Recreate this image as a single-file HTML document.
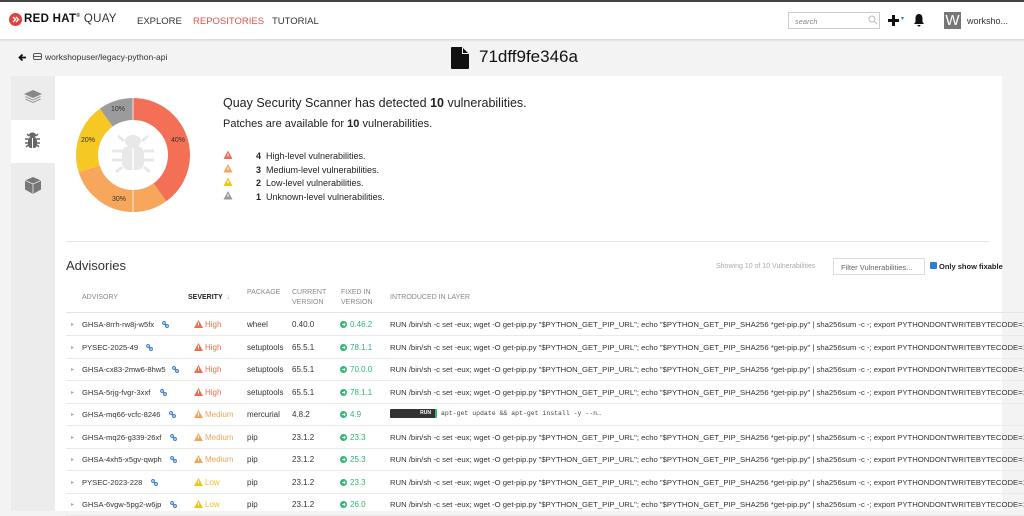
<!DOCTYPE html>
<html><head><meta charset="utf-8"><style>
*{box-sizing:border-box;margin:0;padding:0}
body{width:1024px;height:511px;overflow:hidden;background:#f3f3f3;font-family:"Liberation Sans",sans-serif;color:#333;position:relative}
.abs{position:absolute;white-space:nowrap}
.nav{position:absolute;left:0;top:0;width:1024px;height:40px;background:#fff;border-top:2px solid #444;border-bottom:1px solid #ddd;box-shadow:0 1px 2px rgba(0,0,0,.08)}
.navl{font-size:9.5px;color:#333;top:14px}
.side{position:absolute;left:11px;top:76px;width:44px;height:435px;background:#ececec}
.panel{position:absolute;left:55px;top:76px;width:947px;height:435px;background:#fff}
.row{position:absolute;left:66px;width:958px;height:23px;border-bottom:1px solid #eaeaea;font-size:8px;color:#333}
.row span,.row svg{position:absolute;top:7px;white-space:nowrap}
.h{color:#f26c50}.m{color:#f5a55a}.l{color:#f0c419}.g{color:#2fb673}
.hd{position:absolute;font-size:7px;color:#888;line-height:10px}
</style></head><body>
<div class="nav">
 <svg class="abs" style="left:9px;top:11px" width="13" height="13" viewBox="0 0 13 13"><circle cx="6.5" cy="6.5" r="6.5" fill="#e0413c"/><path d="M4 4l2.5 2.5L4 9M7 4l2.5 2.5L7 9" stroke="#fff" stroke-width="1.4" fill="none"/></svg>
 <div class="abs" style="left:24px;top:11px;font-size:11.5px;font-weight:bold;color:#111;letter-spacing:.3px">RED HAT<span style="font-size:5px;vertical-align:top">®</span> <span style="font-weight:normal;color:#333">QUAY</span></div>
 <div class="abs navl" style="left:137px">EXPLORE</div>
 <div class="abs navl" style="left:193px;color:#d9534f">REPOSITORIES</div>
 <div class="abs navl" style="left:272px">TUTORIAL</div>
 <div class="abs" style="left:788px;top:10px;width:92px;height:17px;border:1px solid #ccc;font-size:7.5px;color:#888;padding:4px 6px;font-style:italic">search</div>
 <svg class="abs" style="left:868px;top:13px" width="10" height="10" viewBox="0 0 10 10"><circle cx="4" cy="4" r="3" stroke="#bbb" fill="none"/><path d="M6.3 6.3L9 9" stroke="#bbb"/></svg>
 <svg class="abs" style="left:888px;top:13px" width="11" height="11" viewBox="0 0 11 11"><path d="M5.5 0v11M0 5.5h11" stroke="#111" stroke-width="3"/></svg>
 <div class="abs" style="left:901px;top:13px;font-size:6px;color:#37a">▾</div>
 <svg class="abs" style="left:913px;top:11px" width="12" height="14" viewBox="0 0 12 14"><path d="M6 1C3.5 1 2.5 3 2.5 5.5V9L1 11h10L9.5 9V5.5C9.5 3 8.5 1 6 1zM4.5 12a1.5 1.5 0 003 0z" fill="#111"/></svg>
 <div class="abs" style="left:944px;top:10px;width:17px;height:17px;background:#777;color:#fff;font-size:15px;text-align:center;line-height:17px">W</div>
 <div class="abs" style="left:967px;top:14px;font-size:9px;color:#333">worksho...</div>
</div>
<svg class="abs" style="left:18px;top:53px" width="9" height="9" viewBox="0 0 9 9"><path d="M8 4.5H2M4.5 1.5l-3 3 3 3" stroke="#111" stroke-width="1.8" fill="none"/></svg>
<svg class="abs" style="left:33px;top:53px" width="9" height="7" viewBox="0 0 9 7"><rect x=".5" y=".5" width="8" height="6" rx="1.5" fill="none" stroke="#555"/><path d="M.5 3.5h8" stroke="#555"/></svg>
<div class="abs" style="left:45px;top:52px;font-size:8.5px;color:#333">workshopuser/legacy-python-api</div>
<svg class="abs" style="left:451px;top:47px" width="18" height="22" viewBox="0 0 18 22"><path d="M0 1a1 1 0 011-1h10l7 7v14a1 1 0 01-1 1H1a1 1 0 01-1-1z" fill="#111"/><path d="M11.5 0.5v6h6" stroke="#f3f3f3" stroke-width="1" fill="none"/></svg>
<div class="abs" style="left:479px;top:47px;font-size:17px;color:#111">71dff9fe346a</div>

<div class="side"></div>
<div class="abs" style="left:11px;top:120px;width:44px;height:43px;background:#fff"></div>
<svg class="abs" style="left:24px;top:90px" width="18" height="15" viewBox="0 0 18 15"><path d="M9 0l9 4-9 4-9-4z" fill="#888"/><path d="M1.5 6.5L9 10l7.5-3.5M1.5 9L9 12.5 16.5 9" stroke="#999" fill="none"/></svg>
<svg class="abs" style="left:24px;top:131px" width="17" height="18" viewBox="0 0 17 18"><ellipse cx="8.5" cy="4" rx="3.5" ry="2.5" fill="#666"/><rect x="4" y="6" width="9" height="11" rx="3" fill="#666"/><path d="M1 8h3M13 8h3M1 12h3M13 12h3M2 16l2-2M15 16l-2-2M3 3l2 2M14 3l-2 2" stroke="#666" stroke-width="1.5"/><path d="M8.5 7v10" stroke="#fff"/></svg>
<svg class="abs" style="left:25px;top:177px" width="16" height="17" viewBox="0 0 16 17"><path d="M8 0l8 3.5v9L8 17 0 12.5v-9z" fill="#777"/><path d="M0 3.5L8 7l8-3.5M8 7v10" stroke="#ececec" stroke-width=".8" fill="none"/></svg>

<div class="panel"></div>
<div class="abs" style="left:1013px;top:312px;width:11px;height:199px;background:#f3f3f3"></div>
<svg class="abs" style="left:76px;top:98px" width="114" height="114" viewBox="0 0 114 114">
 <g transform="rotate(-90 57 57)" fill="none" stroke-width="22">
  <circle cx="57" cy="57" r="46" stroke="#f36f56" stroke-dasharray="115.6 289"/>
  <circle cx="57" cy="57" r="46" stroke="#f7a75b" stroke-dasharray="86.7 289" stroke-dashoffset="-115.6"/>
  <circle cx="57" cy="57" r="46" stroke="#f5c823" stroke-dasharray="57.8 289" stroke-dashoffset="-202.3"/>
  <circle cx="57" cy="57" r="46" stroke="#9b9b9b" stroke-dasharray="28.9 289" stroke-dashoffset="-260.1"/>
 </g>
 <path d="M57 0v22M57 114V92" stroke="#fff" stroke-width=".8"/>
 <g fill="#e8e8e8"><ellipse cx="57" cy="43" rx="8" ry="6"/><rect x="46" y="48" width="22" height="24" rx="7"/><path d="M36 53h10M68 53h10M36 62h10M68 62h10M40 74l6-5M74 74l-6-5M42 38l6 5M72 38l-6 5" stroke="#e8e8e8" stroke-width="3"/></g>
 <path d="M57 50v22" stroke="#fff" stroke-width="1.5"/>
 <g font-size="7" fill="#333" font-family="Liberation Sans"><text x="95" y="44">40%</text><text x="36" y="103">30%</text><text x="5" y="44">20%</text><text x="35" y="13">10%</text></g>
</svg>
<div class="abs" style="left:223px;top:96px;font-size:12.5px;color:#222">Quay Security Scanner has detected <b>10</b> vulnerabilities.</div>
<div class="abs" style="left:223px;top:118px;font-size:11px;color:#222">Patches are available for <b>10</b> vulnerabilities.</div>
<svg class="abs" style="left:223px;top:150px" width="10" height="50" viewBox="0 0 10 50">
 <g><path d="M5 0.5L9.5 9H0.5z" fill="#f26c50"/><path d="M5 14L9.5 22.5H0.5z" fill="#f5a55a"/><path d="M5 27.5L9.5 36H0.5z" fill="#f0c419"/><path d="M5 41L9.5 49.5H0.5z" fill="#999"/></g>
 <g stroke="#fff" stroke-width="1"><path d="M5 3.5v3M5 17v3M5 30.5v3M5 44v3"/></g>
</svg>
<div class="abs" style="left:256px;top:150px;font-size:9px;line-height:13.5px;color:#222">
<div><b>4</b>&nbsp; High-level vulnerabilities.</div>
<div><b>3</b>&nbsp; Medium-level vulnerabilities.</div>
<div><b>2</b>&nbsp; Low-level vulnerabilities.</div>
<div><b>1</b>&nbsp; Unknown-level vulnerabilities.</div>
</div>
<div class="abs" style="left:66px;top:241px;width:923px;border-top:1px solid #e5e5e5"></div>
<div class="abs" style="left:66px;top:258px;font-size:13px;color:#333">Advisories</div>
<div class="abs" style="left:716px;top:263px;font-size:7px;color:#aaa">Showing 10 of 10 Vulnerabilities</div>
<div class="abs" style="left:833px;top:258px;width:92px;height:17px;border:1px solid #ddd;font-size:7.5px;color:#666;padding:4px 7px">Filter Vulnerabilities...</div>
<div class="abs" style="left:930px;top:262px;width:7px;height:7px;background:#2a7fd4;border-radius:1px"></div>
<div class="abs" style="left:939px;top:262px;font-size:7.5px;font-weight:bold;color:#222">Only show fixable</div>

<div class="hd" style="left:82px;top:293px">ADVISORY</div>
<div class="hd" style="left:188px;top:293px;color:#222;font-weight:bold">SEVERITY &nbsp;<span style="color:#999">↓</span></div>
<div class="hd" style="left:247px;top:288px">PACKAGE</div>
<div class="hd" style="left:292px;top:288px">CURRENT<br>VERSION</div>
<div class="hd" style="left:341px;top:288px">FIXED IN<br>VERSION</div>
<div class="hd" style="left:390px;top:293px">INTRODUCED IN LAYER</div>
<div class="abs" style="left:66px;top:312px;width:958px;border-top:1px solid #e5e5e5"></div>

<div id="rows"></div>
<script>
const R=[["GHSA-8rrh-rw8j-w5fx","h","High","wheel","0.40.0","0.46.2"],["PYSEC-2025-49","h","High","setuptools","65.5.1","78.1.1"],["GHSA-cx83-2mw6-8hw5","h","High","setuptools","65.5.1","70.0.0"],["GHSA-5rjg-fvgr-3xxf","h","High","setuptools","65.5.1","78.1.1"],["GHSA-mq66-vcfc-8246","m","Medium","mercurial","4.8.2","4.9"],["GHSA-mq26-g339-26xf","m","Medium","pip","23.1.2","23.3"],["GHSA-4xh5-x5gv-qwph","m","Medium","pip","23.1.2","25.3"],["PYSEC-2023-228","l","Low","pip","23.1.2","23.3"],["GHSA-6vgw-5pg2-w6jp","l","Low","pip","23.1.2","26.0"]];
const L='RUN /bin/sh -c set -eux; wget -O get-pip.py "$PYTHON_GET_PIP_URL"; echo "$PYTHON_GET_PIP_SHA256 *get-pip.py" | sha256sum -c -; export PYTHONDONTWRITEBYTECODE=1; python';
const lk=[96,80,106,94,103,104,104,85,104];
const col={h:'#f26c50',m:'#f5a55a',l:'#f0c419'};
let h='';R.forEach((r,i)=>{const t=313+i*22.5;
const layer=i==4?'<span style="left:324px;top:6px;width:47px;height:9px;background:#333;border-right:2px solid #2fb673;border-radius:1px;color:#fff;font-size:5px;text-align:right;padding:1px 4px 0 0;font-weight:bold">RUN</span><span style="left:375px;font-family:Liberation Mono,monospace;font-size:6.5px;color:#444">apt-get update &amp;&amp; apt-get install -y --n…</span>':'<span style="left:324px;font-size:7.7px">'+L.replace(/</g,'&lt;')+'</span>';
h+='<div class="row" style="top:'+t+'px"><span style="left:5px;color:#aaa;font-size:6px;top:8px">▸</span><span style="left:16px;font-size:7.6px">'+r[0]+'</span>'+
'<svg style="left:'+lk[i]+'px;top:8px" width="7" height="7" viewBox="0 0 7 7"><circle cx="2" cy="2" r="1.4" fill="none" stroke="#3a7fd0" stroke-width="1.1"/><circle cx="5" cy="5" r="1.4" fill="none" stroke="#3a7fd0" stroke-width="1.1"/><path d="M2.5 2.5l2 2" stroke="#3a7fd0"/></svg>'+
'<svg style="left:128px;top:7px" width="9" height="8" viewBox="0 0 9 8"><path d="M4.5 0L9 8H0z" fill="'+col[r[1]]+'"/><path d="M4.5 2.5v3" stroke="#fff"/></svg><span class="'+r[1]+'" style="left:139px">'+r[2]+'</span><span style="left:181px">'+r[3]+'</span><span style="left:226px">'+r[4]+'</span>'+
'<svg style="left:274px;top:8px" width="7" height="7" viewBox="0 0 7 7"><circle cx="3.5" cy="3.5" r="3.5" fill="#2fb673"/><path d="M2 3.5h3M3.7 2l1.4 1.5-1.4 1.5" stroke="#fff" stroke-width=".9" fill="none"/></svg><span class="g" style="left:284px">'+r[5]+'</span>'+layer+'</div>';});
document.getElementById('rows').innerHTML=h;
</script>
</body></html>
